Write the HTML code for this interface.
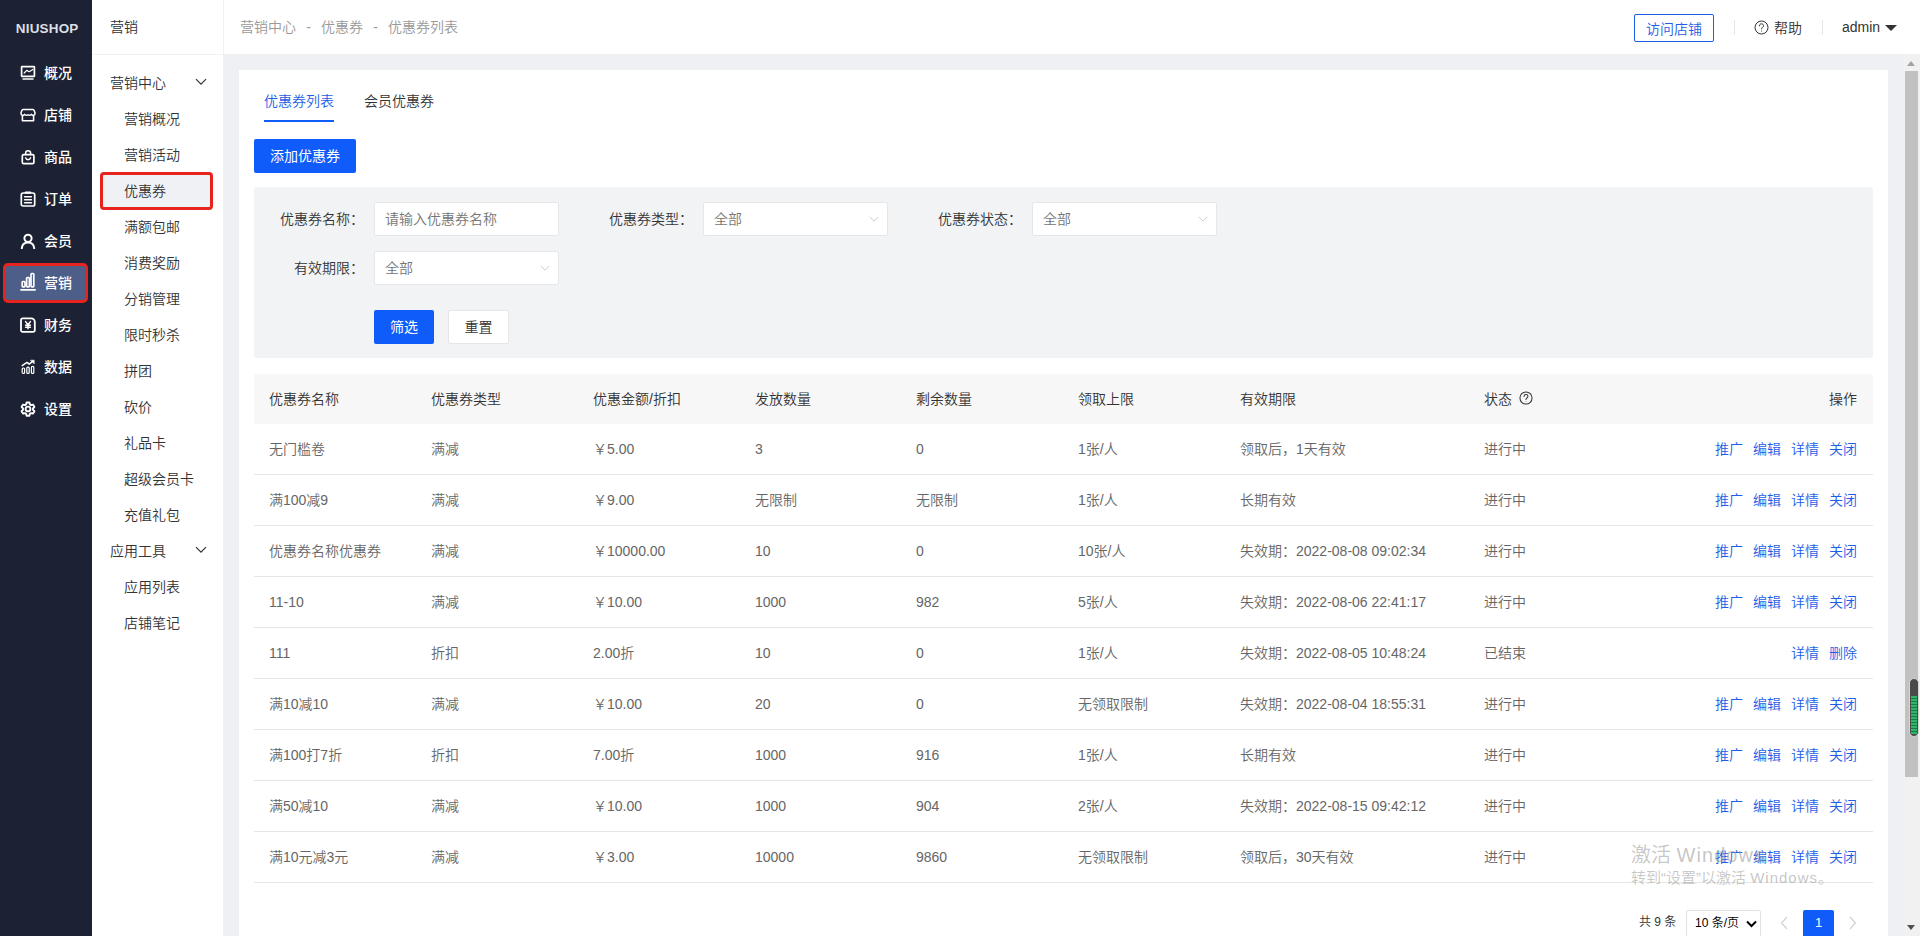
<!DOCTYPE html>
<html lang="zh-CN">
<head>
<meta charset="utf-8">
<title>优惠券列表</title>
<style>
*{box-sizing:border-box;margin:0;padding:0}
html,body{width:1920px;height:936px;overflow:hidden}
body{position:relative;background:#eff0f4;font-family:"Liberation Sans","Noto Sans CJK SC",sans-serif;font-size:14px;color:#333;line-height:1;font-weight:350}
.abs{position:absolute}
/* first sidebar */
#side1{position:absolute;left:0;top:0;width:92px;height:936px;background:#1c2233}
#logo{position:absolute;left:1px;top:22px;width:92px;text-align:center;color:#dcdee6;font-size:12.500px;letter-spacing:.2px;line-height:14px;font-weight:700}
#logo span{display:inline-block;transform:scaleX(1.075);transform-origin:center}
.m1{position:absolute;left:0;width:92px;height:42px;color:#fff;font-size:14px;font-weight:500}
.m1 svg{position:absolute;left:20px;top:13px;width:16px;height:16px}
.m1 span{position:absolute;left:44px;top:12px;line-height:18px}
#m1act{position:absolute;left:3px;top:263px;width:85px;height:40px;background:#4d5e88;border:3px solid #e6241d;border-radius:5px}
/* second sidebar */
#side2{position:absolute;left:92px;top:0;width:132px;height:936px;background:#fff;border-right:1px solid #f0f0f2}
#side2 .hd{position:absolute;left:0;top:0;width:131px;height:55px;border-bottom:1px solid #f1f1f1}
#side2 .hd span{position:absolute;left:18px;top:18px;line-height:18px}
.g2{position:absolute;left:18px;line-height:18px;color:#333}
.i2{position:absolute;left:32px;line-height:18px;color:#333}
.chev{position:absolute;left:103px;width:12px;height:8px}
#i2act{position:absolute;left:8px;top:172px;width:113px;height:38px;background:#f0f1f5;border:3px solid #e6241d;border-radius:4px}
/* header */
#top{position:absolute;left:224px;top:0;width:1696px;height:55px;background:#fff;border-bottom:1px solid #f1f1f1}
#crumb{position:absolute;left:16px;top:18px;line-height:18px;color:#999;white-space:nowrap}
#crumb i{font-style:normal;display:inline-block;width:25px;text-align:center}
#visit{position:absolute;left:1410px;top:14px;width:80px;height:28px;border:1px solid #1e5ee6;border-radius:2px;color:#1e5ee6;text-align:center;line-height:28px}
.vsep{position:absolute;top:20px;width:1px;height:15px;background:#e6e6e6}
/* card */
#card{position:absolute;left:239px;top:70px;width:1649px;height:900px;background:#fff}
.tab{position:absolute;top:22px;line-height:18px}
#addbtn{font-weight:400;position:absolute;left:15px;top:69px;width:102px;height:34px;background:#105cfb;color:#fff;text-align:center;line-height:34px;border-radius:2px}
#filter{position:absolute;left:15px;top:117px;width:1619px;height:171px;background:#f2f3f5;border-radius:3px}
.lab{position:absolute;width:110px;text-align:right;line-height:18px;color:#333}
.inp{position:absolute;width:185px;height:34px;background:#fff;border:1px solid #e6e7ea;border-radius:2px;line-height:32px;padding-left:10px;color:#757575}
.inp svg{position:absolute;right:8px;top:13px;width:10px;height:7px}
/* table */
#thead{position:absolute;left:15px;top:304px;width:1619px;height:50px;background:#f7f7f7;border-radius:2px 2px 0 0}
.row{position:absolute;left:15px;width:1619px;height:51px;border-bottom:1px solid #e6e6e6;color:#666}
.c{position:absolute;top:16px;line-height:18px;white-space:nowrap}
#thead .c{color:#333}
.ops{position:absolute;right:16px;top:16px;line-height:18px;color:#1e5ee6;white-space:nowrap}
.ops a{margin-left:10px;color:#1e5ee6;text-decoration:none}
</style>
</head>
<body>
<div id="side1">
  <div id="logo"><span>NIUSHOP</span></div>
  <div id="m1act"></div>
  <div class="m1" style="top:52px"><svg viewBox="0 0 16 16" fill="none" stroke="#fff" stroke-width="1.700" stroke-linecap="round" stroke-linejoin="round"><rect x="1.600" y="1.600" width="12.800" height="9.800" rx=".5"/><path d="M4.200 8l2.500-2.600 2.500 1.300L12.800 4.400" stroke-width="1.200"/><path d="M3 14.100h10" stroke-width="1.500"/></svg><span>概况</span></div>
  <div class="m1" style="top:94px"><svg viewBox="0 0 16 16" fill="none" stroke="#fff" stroke-width="1.700" stroke-linecap="round" stroke-linejoin="round"><path d="M3.200 2.600h9.600a1.600 1.600 0 0 1 1.500 1.100l.7 2.300v.4a2 2 0 0 1-3.700 1 2.200 2.200 0 0 1-3.300.300 2.200 2.200 0 0 1-3.300-.300 2 2 0 0 1-3.700-1V6l.7-2.300a1.600 1.600 0 0 1 1.500-1.100z" stroke-width="1.500"/><path d="M2.400 9.400v4.400h11.200V9.400" stroke-width="1.600"/></svg><span>店铺</span></div>
  <div class="m1" style="top:136px"><svg viewBox="0 0 16 16" fill="none" stroke="#fff" stroke-width="1.700" stroke-linecap="round" stroke-linejoin="round"><rect x="2.300" y="5.600" width="11.600" height="9" rx="1.400"/><path d="M5.600 5.400V4.200a2.500 2.500 0 0 1 5 0v1.200" stroke-width="1.500"/><path d="M5.600 8.800c.4 1.300 1.300 1.900 2.500 1.900s2.100-.6 2.500-1.900" stroke-width="1.400"/></svg><span>商品</span></div>
  <div class="m1" style="top:178px"><svg viewBox="0 0 16 16" fill="none" stroke="#fff" stroke-width="1.700" stroke-linecap="round" stroke-linejoin="round"><rect x="1.300" y="2" width="13.400" height="13" rx="1.800"/><path d="M5.600 1.600h4.800" stroke-width="2"/><path d="M4.600 5.800h6.800M4.600 8.800h6.800M4.600 11.800h6.800" stroke-width="1.500"/></svg><span>订单</span></div>
  <div class="m1" style="top:220px"><svg viewBox="0 0 16 16" fill="none" stroke="#fff" stroke-width="2" stroke-linecap="round" stroke-linejoin="round"><circle cx="8" cy="5.300" r="3.600"/><path d="M1.800 15.200c.3-3.800 2.700-5.800 6.200-5.800s5.900 2 6.200 5.800"/></svg><span>会员</span></div>
  <div class="m1" style="top:262px"><svg style="top:10px;height:19px" viewBox="0 0 16 19" fill="none" stroke="#fff" stroke-width="1.700" stroke-linecap="round" stroke-linejoin="round"><rect x="2.200" y="9.500" width="2.800" height="5.300" rx=".8"/><rect x="6.600" y="5.500" width="2.800" height="9.300" rx=".8"/><rect x="11" y="1.500" width="2.800" height="13.300" rx=".8"/><path d="M1 17.800h14.200"/></svg><span>营销</span></div>
  <div class="m1" style="top:304px"><svg viewBox="0 0 16 16" fill="none" stroke="#fff" stroke-width="1.800" stroke-linecap="round" stroke-linejoin="round"><path d="M2.600 1.300h8.600a3.600 3.600 0 0 1 3.600 3.600v8.400a1.600 1.600 0 0 1-1.600 1.600H2.600A1.600 1.600 0 0 1 1 13.300V2.900a1.600 1.600 0 0 1 1.600-1.600z"/><path d="M5.600 4.600L8 7.800l2.400-3.200M8 7.800v4M5.600 8.200h4.800M5.600 10.200h4.800" stroke-width="1.500"/></svg><span>财务</span></div>
  <div class="m1" style="top:346px"><svg viewBox="0 0 16 16" fill="none" stroke="#fff" stroke-width="1.200" stroke-linecap="round" stroke-linejoin="round"><rect x="2.200" y="9" width="2.400" height="5.400" rx="1"/><rect x="6.800" y="8.200" width="2.400" height="6.200" rx="1"/><rect x="11.400" y="7.400" width="2.400" height="7" rx="1"/><path d="M2.200 6.600l4.800-3.200 2.200 1.800 3.400-2.800" stroke-width="1.500"/><path d="M10.800 1.200h3.400v3.400z" fill="#fff" stroke-width=".6"/></svg><span>数据</span></div>
  <div class="m1" style="top:388px"><svg viewBox="0 0 16 16" fill="none" stroke="#fff" stroke-width="1.900" stroke-linecap="round" stroke-linejoin="round"><circle cx="8" cy="8" r="2.400"/><path d="M6.600 1.500h2.800l.5 1.900 1.200.7 1.900-.5 1.400 2.400-1.400 1.400v1.400l1.400 1.400-1.400 2.400-1.900-.5-1.200.7-.5 1.900H6.600l-.5-1.900-1.200-.7-1.900.5-1.400-2.400L3 8.800V7.400L1.600 6l1.400-2.400 1.900.5 1.200-.7z"/></svg><span>设置</span></div>
</div>
<div id="side2">
  <div class="hd"><span>营销</span></div>
  <div id="i2act"></div>
  <div class="g2" style="top:74px">营销中心</div><svg class="chev" style="top:78px" viewBox="0 0 12 8" fill="none" stroke="#333" stroke-width="1.200"><path d="M1 1.200l5 5 5-5"/></svg>
  <div class="i2" style="top:110px">营销概况</div>
  <div class="i2" style="top:146px">营销活动</div>
  <div class="i2" style="top:182px">优惠券</div>
  <div class="i2" style="top:218px">满额包邮</div>
  <div class="i2" style="top:254px">消费奖励</div>
  <div class="i2" style="top:290px">分销管理</div>
  <div class="i2" style="top:326px">限时秒杀</div>
  <div class="i2" style="top:362px">拼团</div>
  <div class="i2" style="top:398px">砍价</div>
  <div class="i2" style="top:434px">礼品卡</div>
  <div class="i2" style="top:470px">超级会员卡</div>
  <div class="i2" style="top:506px">充值礼包</div>
  <div class="g2" style="top:542px">应用工具</div><svg class="chev" style="top:546px" viewBox="0 0 12 8" fill="none" stroke="#333" stroke-width="1.200"><path d="M1 1.200l5 5 5-5"/></svg>
  <div class="i2" style="top:578px">应用列表</div>
  <div class="i2" style="top:614px">店铺笔记</div>
</div>
<div id="top">
  <div id="crumb">营销中心<i>-</i>优惠券<i>-</i>优惠券列表</div>
  <div id="visit">访问店铺</div>
  <div class="vsep" style="left:1510px"></div>
  <svg class="abs" style="left:1530px;top:20px;width:15px;height:15px" viewBox="0 0 15 15" fill="none" stroke="#333" stroke-width="1"><circle cx="7.500" cy="7.500" r="6.500"/><path d="M5.400 5.900c0-1.300.9-2.100 2.100-2.100s2.100.8 2.100 1.900c0 1.500-2.100 1.700-2.100 3.300" stroke-linecap="round"/><circle cx="7.500" cy="11.100" r=".5" fill="#333" stroke="none"/></svg>
  <div class="abs" style="left:1550px;top:19px;line-height:18px">帮助</div>
  <div class="vsep" style="left:1598px"></div>
  <div class="abs" style="left:1618px;top:18px;line-height:18px">admin</div>
  <div class="abs" style="left:1661px;top:25px;width:0;height:0;border-left:6px solid transparent;border-right:6px solid transparent;border-top:6px solid #333"></div>
</div>
<div id="card">
  <div class="tab" style="left:25px;color:#1e5ee6">优惠券列表</div>
  <div class="tab" style="left:125px">会员优惠券</div>
  <div class="abs" style="left:25px;top:50px;width:70px;height:2px;background:#105cfb"></div>
  <div id="addbtn">添加优惠券</div>
  <div id="filter">
    <div class="lab" style="left:0;top:23px">优惠券名称：</div>
    <div class="inp" style="left:120px;top:15px">请输入优惠券名称</div>
    <div class="lab" style="left:329px;top:23px">优惠券类型：</div>
    <div class="inp" style="left:449px;top:15px">全部<svg viewBox="0 0 12 8" fill="none" stroke="#c2c2c2" stroke-width="1"><path d="M1 1l5 5 5-5"/></svg></div>
    <div class="lab" style="left:658px;top:23px">优惠券状态：</div>
    <div class="inp" style="left:778px;top:15px">全部<svg viewBox="0 0 12 8" fill="none" stroke="#c2c2c2" stroke-width="1"><path d="M1 1l5 5 5-5"/></svg></div>
    <div class="lab" style="left:0;top:72px">有效期限：</div>
    <div class="inp" style="left:120px;top:64px">全部<svg viewBox="0 0 12 8" fill="none" stroke="#c2c2c2" stroke-width="1"><path d="M1 1l5 5 5-5"/></svg></div>
    <div class="abs" style="left:120px;top:123px;width:60px;height:34px;background:#105cfb;color:#fff;font-weight:400;text-align:center;line-height:34px;border-radius:2px">筛选</div>
    <div class="abs" style="left:194px;top:123px;width:61px;height:34px;background:#fff;border:1px solid #e6e6e6;color:#333;text-align:center;line-height:33px;border-radius:2px">重置</div>
  </div>
  <div id="thead"><div class="c" style="left:15px">优惠券名称</div><div class="c" style="left:177px">优惠券类型</div><div class="c" style="left:339px">优惠金额/折扣</div><div class="c" style="left:501px">发放数量</div><div class="c" style="left:662px">剩余数量</div><div class="c" style="left:824px">领取上限</div><div class="c" style="left:986px">有效期限</div><div class="c" style="left:1230px">状态</div><svg class="abs" style="left:1265px;top:17px;width:14px;height:14px" viewBox="0 0 15 15" fill="none" stroke="#333" stroke-width="1.100"><circle cx="7.500" cy="7.500" r="6.500"/><path d="M5.400 5.900c0-1.300.9-2.100 2.100-2.100s2.100.8 2.100 1.900c0 1.500-2.100 1.700-2.100 3.300" stroke-linecap="round"/><circle cx="7.500" cy="11.100" r=".5" fill="#333" stroke="none"/></svg><div class="ops" style="color:#333">操作</div></div>
  <div class="row" style="top:354px"><div class="c" style="left:15px">无门槛卷</div><div class="c" style="left:177px">满减</div><div class="c" style="left:339px">￥5.00</div><div class="c" style="left:501px">3</div><div class="c" style="left:662px">0</div><div class="c" style="left:824px">1张/人</div><div class="c" style="left:986px">领取后，1天有效</div><div class="c" style="left:1230px">进行中</div><div class="ops"><a>推广</a><a>编辑</a><a>详情</a><a>关闭</a></div></div>
  <div class="row" style="top:405px"><div class="c" style="left:15px">满100减9</div><div class="c" style="left:177px">满减</div><div class="c" style="left:339px">￥9.00</div><div class="c" style="left:501px">无限制</div><div class="c" style="left:662px">无限制</div><div class="c" style="left:824px">1张/人</div><div class="c" style="left:986px">长期有效</div><div class="c" style="left:1230px">进行中</div><div class="ops"><a>推广</a><a>编辑</a><a>详情</a><a>关闭</a></div></div>
  <div class="row" style="top:456px"><div class="c" style="left:15px">优惠券名称优惠券</div><div class="c" style="left:177px">满减</div><div class="c" style="left:339px">￥10000.00</div><div class="c" style="left:501px">10</div><div class="c" style="left:662px">0</div><div class="c" style="left:824px">10张/人</div><div class="c" style="left:986px">失效期：2022-08-08 09:02:34</div><div class="c" style="left:1230px">进行中</div><div class="ops"><a>推广</a><a>编辑</a><a>详情</a><a>关闭</a></div></div>
  <div class="row" style="top:507px"><div class="c" style="left:15px">11-10</div><div class="c" style="left:177px">满减</div><div class="c" style="left:339px">￥10.00</div><div class="c" style="left:501px">1000</div><div class="c" style="left:662px">982</div><div class="c" style="left:824px">5张/人</div><div class="c" style="left:986px">失效期：2022-08-06 22:41:17</div><div class="c" style="left:1230px">进行中</div><div class="ops"><a>推广</a><a>编辑</a><a>详情</a><a>关闭</a></div></div>
  <div class="row" style="top:558px"><div class="c" style="left:15px">111</div><div class="c" style="left:177px">折扣</div><div class="c" style="left:339px">2.00折</div><div class="c" style="left:501px">10</div><div class="c" style="left:662px">0</div><div class="c" style="left:824px">1张/人</div><div class="c" style="left:986px">失效期：2022-08-05 10:48:24</div><div class="c" style="left:1230px">已结束</div><div class="ops"><a>详情</a><a>删除</a></div></div>
  <div class="row" style="top:609px"><div class="c" style="left:15px">满10减10</div><div class="c" style="left:177px">满减</div><div class="c" style="left:339px">￥10.00</div><div class="c" style="left:501px">20</div><div class="c" style="left:662px">0</div><div class="c" style="left:824px">无领取限制</div><div class="c" style="left:986px">失效期：2022-08-04 18:55:31</div><div class="c" style="left:1230px">进行中</div><div class="ops"><a>推广</a><a>编辑</a><a>详情</a><a>关闭</a></div></div>
  <div class="row" style="top:660px"><div class="c" style="left:15px">满100打7折</div><div class="c" style="left:177px">折扣</div><div class="c" style="left:339px">7.00折</div><div class="c" style="left:501px">1000</div><div class="c" style="left:662px">916</div><div class="c" style="left:824px">1张/人</div><div class="c" style="left:986px">长期有效</div><div class="c" style="left:1230px">进行中</div><div class="ops"><a>推广</a><a>编辑</a><a>详情</a><a>关闭</a></div></div>
  <div class="row" style="top:711px"><div class="c" style="left:15px">满50减10</div><div class="c" style="left:177px">满减</div><div class="c" style="left:339px">￥10.00</div><div class="c" style="left:501px">1000</div><div class="c" style="left:662px">904</div><div class="c" style="left:824px">2张/人</div><div class="c" style="left:986px">失效期：2022-08-15 09:42:12</div><div class="c" style="left:1230px">进行中</div><div class="ops"><a>推广</a><a>编辑</a><a>详情</a><a>关闭</a></div></div>
  <div class="row" style="top:762px"><div class="c" style="left:15px">满10元减3元</div><div class="c" style="left:177px">满减</div><div class="c" style="left:339px">￥3.00</div><div class="c" style="left:501px">10000</div><div class="c" style="left:662px">9860</div><div class="c" style="left:824px">无领取限制</div><div class="c" style="left:986px">领取后，30天有效</div><div class="c" style="left:1230px">进行中</div><div class="ops"><a>推广</a><a>编辑</a><a>详情</a><a>关闭</a></div></div>
  <div class="abs" style="left:1400px;top:843px;line-height:18px;font-size:12px;color:#333">共 9 条</div>
  <div class="abs" style="left:1447px;top:840px;width:75px;height:28px;border:1px solid #e2e2e2;border-radius:2px;background:#fff;font-size:12px;color:#000;line-height:24px;padding-left:8px">10 条/页<svg class="abs" style="left:59px;top:9px;width:11px;height:8px" viewBox="0 0 11 8" fill="none" stroke="#000" stroke-width="2"><path d="M1 1.500l4.500 4.500L10 1.500"/></svg></div>
  <svg class="abs" style="left:1541px;top:846px;width:8px;height:14px" viewBox="0 0 8 14" fill="none" stroke="#d2d2d2" stroke-width="1.200"><path d="M7 1L1.500 7 7 13"/></svg>
  <div class="abs" style="left:1564px;top:840px;width:31px;height:30px;background:#105cfb;color:#fff;font-size:13px;text-align:center;line-height:26px;border-radius:2px">1</div>
  <svg class="abs" style="left:1610px;top:846px;width:8px;height:14px" viewBox="0 0 8 14" fill="none" stroke="#d2d2d2" stroke-width="1.200"><path d="M1 1l5.500 6L1 13"/></svg>

</div>
<div class="abs" style="left:1631px;top:842px;font-size:20px;line-height:26px;color:rgba(150,150,150,.55);white-space:nowrap;font-family:'Liberation Sans','Noto Sans CJK SC',sans-serif">激活 <span style="letter-spacing:1.050px">Windows</span></div>
<div class="abs" style="left:1631px;top:868px;font-size:15px;line-height:20px;color:rgba(150,150,150,.55);white-space:nowrap">转到“设置”以激活 <span style="letter-spacing:1px">Windows</span>。</div>
<div id="sbar" class="abs" style="left:1903px;top:55px;width:17px;height:881px;background:#f1f1f1">
  <div class="abs" style="left:4px;top:6px;width:0;height:0;border-left:4.500px solid transparent;border-right:4.500px solid transparent;border-bottom:5px solid #a3a3a3"></div>
  <div class="abs" style="left:2px;top:16px;width:13px;height:706px;background:#c1c1c1"></div>
  <div class="abs" style="left:4px;top:870px;width:0;height:0;border-left:4.500px solid transparent;border-right:4.500px solid transparent;border-top:5px solid #505050"></div>
  <div class="abs" style="left:6px;top:623px;width:10px;height:59px;border-radius:5px;background:#4a4a4a;border:1px solid #d5d5d5;overflow:hidden"><div class="abs" style="left:1px;top:17px;width:6px;height:38px;background:repeating-linear-gradient(#2fb56a 0,#2fb56a 2px,#1d7a45 2px,#1d7a45 3px)"></div></div>
</div>
</body>
</html>
